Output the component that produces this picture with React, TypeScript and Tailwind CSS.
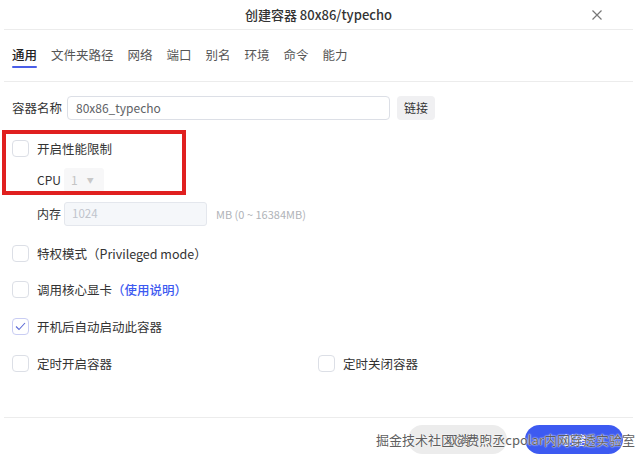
import React from 'react';

const TABS = ['通用', '文件夹路径', '网络', '端口', '别名', '环境', '命令', '能力'];

function Checkbox({ checked = false }: { checked?: boolean }) {
    return (
        <div
            className={`w-[17px] h-[17px] rounded-[4px] border flex items-center justify-center shrink-0 ${
                checked ? 'border-[#c9cdf3]' : 'border-[#dcdfe6]'
            }`}
        >
            {checked && (
                <svg width="11" height="9" viewBox="0 0 11 9" fill="none">
                    <path d="M1 4.5 L4 7.5 L10 1" stroke="#5d6bd6" strokeWidth="1.1" />
                </svg>
            )}
        </div>
    );
}

function CheckRow({ checked, children, className = '' }: { checked?: boolean; children: React.ReactNode; className?: string }) {
    return (
        <div className={`flex items-center h-[17px] gap-[8px] ${className}`}>
            <Checkbox checked={checked} />
            <span className="text-[12.5px] text-[#333] leading-[17px] whitespace-nowrap">{children}</span>
        </div>
    );
}

export default function App() {
    return (
        <div className="relative w-[637px] h-[459px] bg-white overflow-hidden font-['Noto_Sans_CJK_SC','Noto_Sans',sans-serif]">
            {/* Header */}
            <div className="relative h-[30px] mx-[4px] border-b border-[#ececec] flex items-center justify-center">
                <span className="text-[13px] font-medium text-[#333] leading-[19px]">创建容器 80x86/typecho</span>
                <svg className="absolute right-[31px] top-[10px]" width="10" height="10" viewBox="0 0 10 10">
                    <path d="M0.5 0.5 L9.5 9.5 M9.5 0.5 L0.5 9.5" stroke="#777" strokeWidth="1.2" />
                </svg>
            </div>

            {/* Tabs */}
            <div className="h-[52px] mx-[4px] border-b border-[#ececec] pl-[8px] pt-[15px] flex gap-[14px]">
                {TABS.map((t, i) => (
                    <div key={t} className="flex flex-col">
                        <span className={`text-[12.5px] leading-[19px] ${i === 0 ? 'text-[#222] font-medium' : 'text-[#555]'}`}>{t}</span>
                        {i === 0 && <div className="mt-[2px] h-[2px] bg-[#4a5ee8] rounded-full" />}
                    </div>
                ))}
            </div>

            {/* Body */}
            <div className="px-[12px]">
                <div className="mt-[14px] h-[24px] flex items-center">
                    <span className="text-[12.5px] text-[#333] w-[55px] whitespace-nowrap">容器名称</span>
                    <div className="w-[323px] h-[24px] border border-[#dcdfe6] rounded-[4px] flex items-center px-[8px] text-[12px] text-[#606266]">
                        80x86_typecho
                    </div>
                    <button className="ml-[7px] w-[38px] h-[24px] rounded-[4px] bg-[#f0f0f2] text-[12px] text-[#333]">链接</button>
                </div>

                <CheckRow className="mt-[20px]">开启性能限制</CheckRow>

                <div className="mt-[11px] h-[24px] flex items-center pl-[25px]">
                    <span className="text-[12px] text-[#333] w-[27px]">CPU</span>
                    <div className="w-[40px] h-[24px] bg-[#f7f7f8] rounded-[3px] flex items-center pl-[7px] gap-[9px] text-[12px] text-[#c4c4c4]">
                        <span>1</span>
                        <span className="text-[7px] text-[#c8c8c8]">▼</span>
                    </div>
                </div>

                <div className="mt-[10px] h-[24px] flex items-center pl-[25px]">
                    <span className="text-[12px] text-[#333] w-[27px]">内存</span>
                    <div className="w-[143px] h-[24px] bg-[#f5f7fa] border border-[#e4e7ed] rounded-[3px] flex items-center px-[7px] text-[11.5px] text-[#c0c4cc]">
                        1024
                    </div>
                    <span className="ml-[9px] text-[11px] text-[#b0b3b8]">MB (0 ~ 16384MB)</span>
                </div>

                <CheckRow className="mt-[19px]">特权模式（Privileged mode）</CheckRow>
                <CheckRow className="mt-[19px]">
                    调用核心显卡<span className="text-[#3d5af1] font-medium">（使用说明）</span>
                </CheckRow>
                <CheckRow className="mt-[20px]" checked>
                    开机后自动启动此容器
                </CheckRow>
                <div className="mt-[20px] flex">
                    <CheckRow className="w-[306px]">定时开启容器</CheckRow>
                    <CheckRow>定时关闭容器</CheckRow>
                </div>
            </div>

            {/* Footer */}
            <div className="absolute left-0 right-0 bottom-0 h-[42px] mx-[4px] border-t border-[#ececec] flex items-start justify-end pt-[7px] pr-[10px] gap-[18px]">
                <button className="w-[99px] h-[29px] rounded-full bg-[#ececec] text-[12px] text-[#333]">取消</button>
                <button className="w-[98px] h-[29px] rounded-full bg-[#3d5af1] text-[12px] text-white">创建</button>
            </div>

            {/* Annotation box */}
            <div className="absolute left-[2px] top-[130px] w-[184px] h-[65px] border-[4px] border-[#e0201f] pointer-events-none" />

            {/* Watermark */}
            <div className="absolute left-[376px] top-[430px] text-[13px] leading-[19px] text-[#5f5f5f] whitespace-nowrap pointer-events-none [text-shadow:0_0_2px_#fff,0_0_1px_#fff]">
                掘金技术社区@费煦丞cpolar内网穿透实验室
            </div>
        </div>
    );
}
